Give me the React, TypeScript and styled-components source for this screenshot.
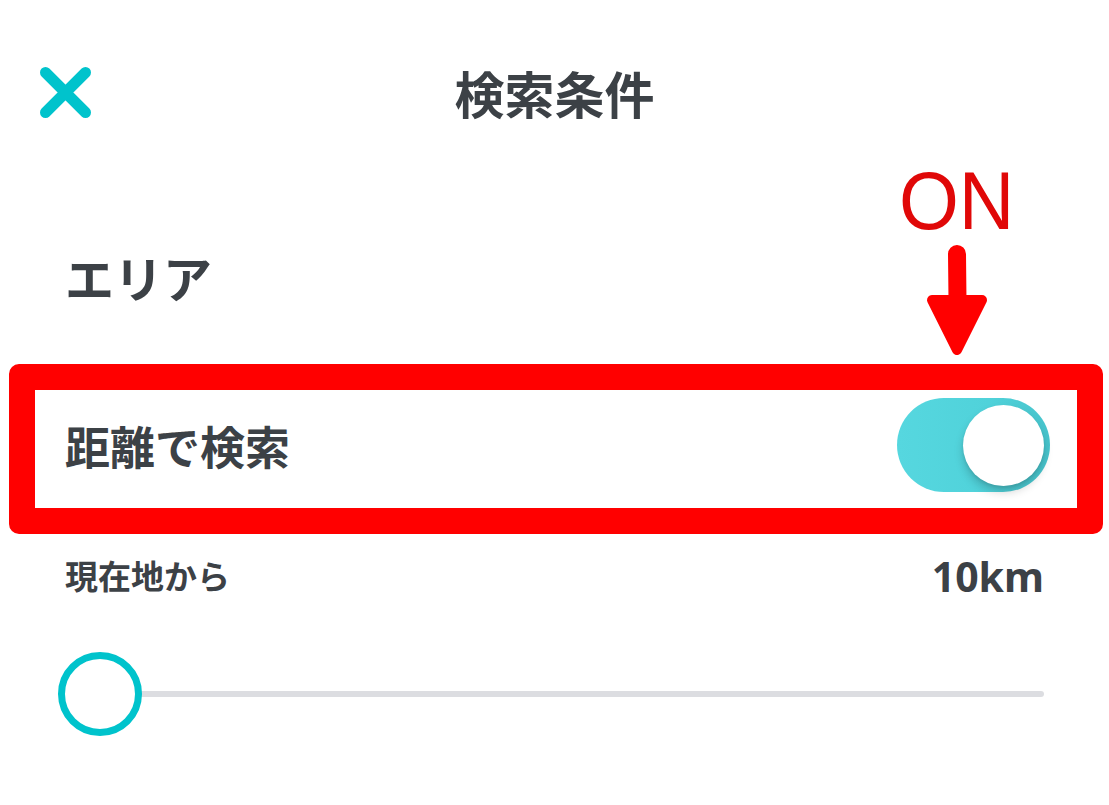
import React from "react";
import styled, { createGlobalStyle } from "styled-components";

const GlobalStyle = createGlobalStyle`
  html, body { margin: 0; padding: 0; background: #ffffff; }
  * { box-sizing: border-box; }
  body { font-family: "Noto Sans CJK JP", "Noto Sans", sans-serif; }
`;

const TEXT = "#3c4146";
const TEAL = "#00c3cc";

const Page = styled.div`
  position: relative;
  width: 1109px;
  height: 805px;
  background: #ffffff;
  overflow: hidden;
  color: ${TEXT};
`;

const Header = styled.header`
  display: grid;
  grid-template-columns: 1fr auto 1fr;
  align-items: center;
  height: 184px;
`;

const CloseButton = styled.button`
  justify-self: start;
  margin-left: 40px;
  padding: 0;
  border: 0;
  background: none;
  width: 51px;
  height: 51px;
  display: flex;
`;

const Title = styled.h1`
  margin: 0;
  font-size: 50px;
  line-height: 1;
  font-weight: 700;
  letter-spacing: 0;
`;

const SectionTitle = styled.h2`
  margin: 0;
  height: 180px;
  padding: 4px 0 0 65px;
  display: flex;
  align-items: center;
  font-size: 49px;
  line-height: 1;
  font-weight: 700;
`;

const Highlight = styled.div`
  margin: 0 6px 0 9px;
  height: 170px;
  border: 26px solid #ff0000;
  border-radius: 10px;
  display: flex;
  align-items: center;
  justify-content: space-between;
  padding: 0 27px 8px 30px;
`;

const RowLabel = styled.span`
  font-size: 45px;
  line-height: 1;
  font-weight: 700;
`;

const ToggleTrack = styled.div<{ $on: boolean }>`
  position: relative;
  width: 153px;
  height: 94px;
  border-radius: 47px;
  background: ${(p) => (p.$on ? "linear-gradient(90deg, #56d7df 0%, #50d2da 60%, #47c4cc 100%)" : "#e3e4e8")};
`;

const ToggleKnob = styled.div<{ $on: boolean }>`
  position: absolute;
  top: 7px;
  left: ${(p) => (p.$on ? "66px" : "6px")};
  width: 81px;
  height: 81px;
  border-radius: 50%;
  background: #ffffff;
  box-shadow: 0 6px 10px rgba(0, 0, 0, 0.18), 0 2px 3px rgba(0, 0, 0, 0.08);
`;

const ValueRow = styled.div`
  height: 82px;
  padding: 0 65px;
  display: flex;
  align-items: center;
  justify-content: space-between;
`;

const ValueLabel = styled.span`
  font-size: 33px;
  line-height: 1;
  font-weight: 700;
`;

const ValueText = styled.span`
  font-family: "Noto Sans", "Noto Sans CJK JP", sans-serif;
  font-size: 41px;
  line-height: 1;
  font-weight: 700;
  padding-top: 2px;
`;

const Slider = styled.div`
  position: relative;
  margin: 36px 65px 0 65px;
  height: 84px;
  display: flex;
  align-items: center;
`;

const SliderTrack = styled.div`
  width: 100%;
  height: 6px;
  border-radius: 3px;
  background: #dcdde1;
`;

const SliderThumb = styled.div`
  position: absolute;
  top: 0;
  left: -7px;
  width: 84px;
  height: 84px;
  border-radius: 50%;
  border: 7px solid ${TEAL};
  background: #ffffff;
`;

const OnLabel = styled.div`
  position: absolute;
  left: 899px;
  top: 161px;
  font-family: "Liberation Sans", Arial, sans-serif;
  font-size: 81px;
  line-height: 1;
  font-weight: 400;
  color: #e00808;
  transform: scaleX(0.95);
  transform-origin: left top;
`;

const ArrowMark = styled.svg`
  position: absolute;
  left: 924px;
  top: 244px;
`;

export default function App() {
  const on = true;
  return (
    <>
      <GlobalStyle />
      <Page>
        <Header>
          <CloseButton aria-label="閉じる">
            <svg width="51" height="51" viewBox="0 0 51 51">
              <path
                d="M5.5 5.5 L45.5 45.5 M45.5 5.5 L5.5 45.5"
                stroke={TEAL}
                strokeWidth="11"
                strokeLinecap="round"
                fill="none"
              />
            </svg>
          </CloseButton>
          <Title>検索条件</Title>
          <div />
        </Header>

        <SectionTitle>エリア</SectionTitle>

        <Highlight>
          <RowLabel>距離で検索</RowLabel>
          <ToggleTrack $on={on}>
            <ToggleKnob $on={on} />
          </ToggleTrack>
        </Highlight>

        <ValueRow>
          <ValueLabel>現在地から</ValueLabel>
          <ValueText>10km</ValueText>
        </ValueRow>

        <Slider>
          <SliderTrack />
          <SliderThumb />
        </Slider>

        <OnLabel>ON</OnLabel>
        <ArrowMark width="66" height="116" viewBox="0 0 66 116">
          <path
            d="M33 10 L33.5 56"
            stroke="#ff0000"
            strokeWidth="18"
            strokeLinecap="round"
            fill="none"
          />
          <path
            d="M8 56 L58 56 L33 106 Z"
            fill="#ff0000"
            stroke="#ff0000"
            strokeWidth="10"
            strokeLinejoin="round"
          />
        </ArrowMark>
      </Page>
    </>
  );
}
